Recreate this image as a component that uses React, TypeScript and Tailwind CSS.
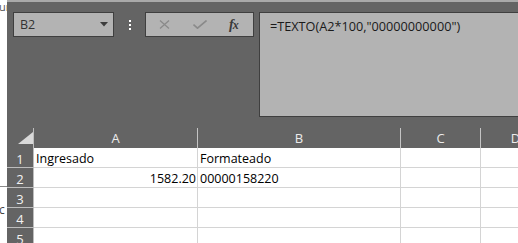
import React from "react";

const font = "font-['Open_Sans',sans-serif]";

function Grid() {
  const rows: [string, string, string][] = [
    ["1", "Ingresado", "Formateado"],
    ["2", "1582.20", "00000158220"],
    ["3", "", ""],
    ["4", "", ""],
    ["5", "", ""],
  ];
  return (
    <div className="grid grid-cols-[27px_164px_203px_80px_70px] grid-rows-[20px_20px_20px_20px_20px_20px]">
      <div className="flex items-end justify-end border-r border-[#bdbdbd] pb-[4px]">
        <svg width="16" height="12" viewBox="0 0 16 12">
          <polygon points="1,12 16,12 16,0" fill="#d9d9d9" />
        </svg>
      </div>
      {["A", "B", "C", "D"].map((c) => (
        <div
          key={c}
          className="flex items-center justify-center border-r border-[#c4c4c4] text-[13px] leading-[20px] text-[#ececec]"
        >
          {c}
        </div>
      ))}
      {rows.map(([n, a, b]) => (
        <React.Fragment key={n}>
          <div className="flex items-center justify-center border-r border-b border-[#bdbdbd] bg-[#646464] pt-[2px] text-[13px] leading-[18px] text-[#f2f2f2]">
            {n}
          </div>
          <div
            className={`border-r border-b border-[#d4d4d4] bg-white pt-px text-[12.5px] leading-[19px] text-black whitespace-nowrap overflow-hidden ${
              n === "2" ? "text-right pr-[1px]" : "pl-[2px]"
            }`}
          >
            {a}
          </div>
          <div className="border-r border-b border-[#d4d4d4] bg-white pt-px pl-[2px] text-[12.5px] leading-[19px] text-black whitespace-nowrap overflow-hidden">
            {b}
          </div>
          <div className="border-r border-b border-[#d4d4d4] bg-white" />
          <div className="border-r border-b border-[#d4d4d4] bg-white" />
        </React.Fragment>
      ))}
    </div>
  );
}

export default function App() {
  return (
    <div className={`w-[518px] h-[243px] overflow-hidden flex bg-white ${font}`}>
      <div className="w-[7px] shrink-0 flex flex-col overflow-hidden bg-white">
        <div className="mt-[1px] -ml-[1px] text-[11px] leading-[11px] text-[#555] whitespace-nowrap">ur</div>
        <div className="mt-[174px] h-px bg-[#8a8a8a]" />
        <div className="mt-[17px] -ml-[1px] text-[12px] leading-[12px] text-[#444]">c</div>
      </div>

      <div className="flex-1 min-w-0 flex flex-col bg-[#646464] overflow-hidden">
        <div className="h-[2px] shrink-0 bg-[#a9a9a9]" />
        <div className="flex items-start pt-[10px] pl-[6px] h-[115px] shrink-0">
          <div className="w-[101px] h-[25px] shrink-0 border border-[#3f3f3f] bg-[#b3b3b3] flex items-center pl-[6px] pr-[5px]">
            <span className="flex-1 text-[12.5px] leading-[20px] text-[#333]">B2</span>
            <svg width="8" height="5" viewBox="0 0 8 5">
              <polygon points="0,0 8,0 4,4.5" fill="#3c3c3c" />
            </svg>
          </div>
          <div className="ml-[15px] mt-[8px] w-[2px] flex flex-col gap-[2px] shrink-0">
            <div className="w-[2px] h-[2px] bg-white" />
            <div className="w-[2px] h-[2px] bg-white" />
            <div className="w-[2px] h-[2px] bg-white" />
          </div>
          <div className="ml-[14px] w-[109px] h-[25px] shrink-0 border border-[#3f3f3f] bg-[#b3b3b3] flex items-center pl-[13px]">
            <svg width="11" height="9" viewBox="0 0 11 9" className="shrink-0">
              <path d="M1 0.5 L10 8.5 M10 0.5 L1 8.5" stroke="#8a8a8a" strokeWidth="1.3" fill="none" />
            </svg>
            <svg width="14" height="9" viewBox="0 0 14 9" className="ml-[23px] shrink-0">
              <path d="M0.5 4.5 L4.5 8.2 L13.5 0.5" stroke="#8a8a8a" strokeWidth="1.6" fill="none" />
            </svg>
            <span className="ml-[22px] font-['Liberation_Serif',serif] italic font-semibold text-[14px] leading-[14px] text-[#3a3a3a] tracking-[-1px]">
              f<span className="text-[12px]">x</span>
            </span>
          </div>
          <div className="ml-[5px] flex-1 h-[105px] border-l border-t border-b border-[#3f3f3f] bg-[#b3b3b3] pl-[10px] pt-[3px]">
            <div className="text-[12.7px] leading-[20px] text-[#1a1a1a] whitespace-nowrap">
              =TEXTO(A2*100,"00000000000")
            </div>
          </div>
        </div>
        <div className="h-[11px] shrink-0" />
        <Grid />
      </div>
    </div>
  );
}
